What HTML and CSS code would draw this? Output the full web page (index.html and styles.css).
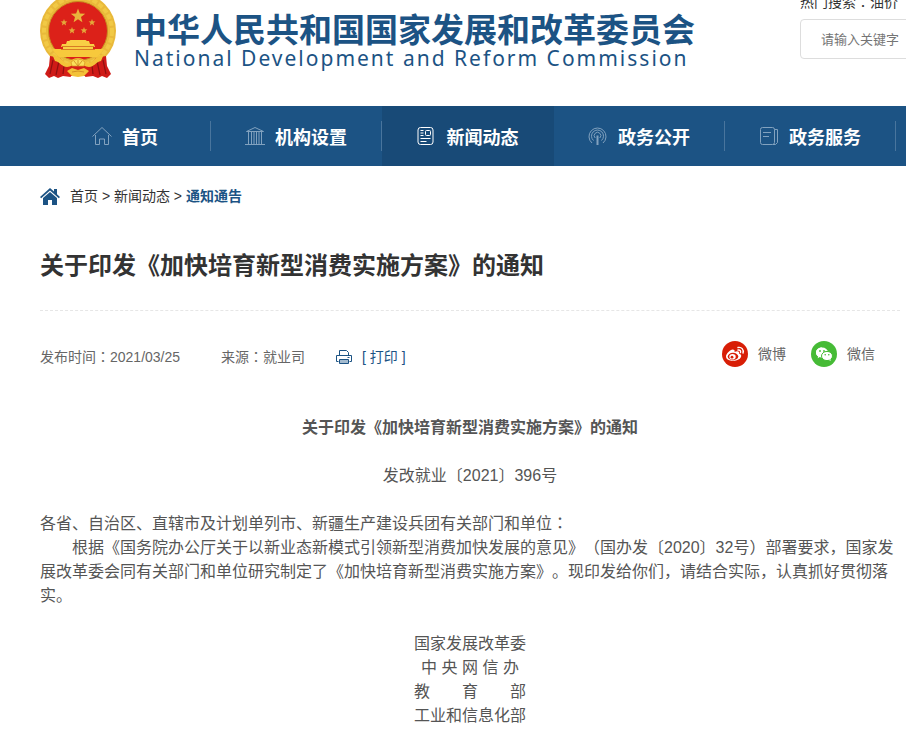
FILE: index.html
```html
<!DOCTYPE html>
<html lang="zh-CN">
<head>
<meta charset="utf-8">
<title>关于印发《加快培育新型消费实施方案》的通知</title>
<link rel="stylesheet" href="styles.css">
</head>
<body>
<header class="header">
  <a class="brand" href="#">
    <svg class="emblem" viewBox="0 0 76 80" aria-hidden="true">
      <circle cx="38" cy="31" r="38" fill="#e9b93a"/>
      <circle cx="38" cy="31" r="34" fill="none" stroke="#f1c945" stroke-width="4" stroke-dasharray="5 2"/>
      <circle cx="38" cy="31" r="29.500" fill="#dc2119" stroke="#c98d20"/>
      <path d="M12 49h52a31 31 0 0 1-7 8H19a31 31 0 0 1-7-8z" fill="#f7c93c"/>
      <path d="M27 41h22l1 3h4l1 3h-2v3H23v-3h-2l1-3h4zM29 41l1.500-1h15l1.500 1v3H29z" fill="#f9cf45"/>
      <path d="M22 46.500h32M21 49.500h34" stroke="#cf661c" stroke-width=".8"/>
      <path d="M38 8.500l1.900 5 5.300.2-4.200 3.400 1.400 5.100L38 19.300l-4.400 2.900 1.400-5.100-4.200-3.400 5.300-.2z" fill="#e9b53c"/>
      <g fill="#e4a83a">
        <path id="star" d="M24 19l.9 2.300 2.500.1-1.900 1.600.6 2.400-2.100-1.300-2.100 1.300.6-2.400-1.900-1.600 2.500-.1z"/>
        <use href="#star" x="28"/><use href="#star" x="8" y="8"/><use href="#star" x="20" y="8"/>
      </g>
      <path d="M10 56l10 2 7 8 4 11-8-1-5 2-4-2-5 2-4-4 4-8z" fill="#cf1a17"/>
      <path d="M66 56l-10 2-7 8-4 11 8-1 5 2 4-2 5 2 4-4-4-8z" fill="#cf1a17"/>
      <path d="M24 65h28v11H24z" fill="#d51f18"/>
      <path d="M13 60l-3 14M19 61l-3 14M24 66l-1 8M63 60l3 14M57 61l3 14M52 66l1 8" stroke="#8f1010" stroke-width="1.200"/>
      <path d="M12 54c8 2 10 7 14 9 4 1 5-5 12-5s8 6 12 5c4-2 6-7 14-9l-3 7c-5 1-7 6-12 6-4 0-6-3-11-3s-7 3-11 3c-5 0-7-5-12-6z" fill="#f3c239"/>
      <path d="M31 62l3-2 4-1 4 1 3 2-1 4H32z" fill="#fae05b" stroke="#d99422" stroke-width=".7"/>
      <path d="M27 71l5-3 6 2 6-2 5 3-5 5-6 1-6-1z" fill="#f3c239"/>
      <path d="M34 61l4 5 4-5M38 60v6M32 72l6-1 6 1" fill="none" stroke="#cc8420" stroke-width=".8"/>
    </svg>
    <span class="names">
      <span class="name-zh">中华人民共和国国家发展和改革委员会</span>
      <span class="name-en" lang="en">National Development and Reform Commission</span>
    </span>
  </a>
  <form class="search">
    <label class="hot" for="q">热门搜索<span class="mid" lang="ja">：</span>油价</label>
    <input class="query" id="q" type="text" placeholder="请输入关键字">
  </form>
</header>

<nav class="nav">
  <ul class="menu">
    <li class="item"><a class="link" href="#">
      <svg class="icon" viewBox="0 0 20 20"><path d="M.5 10.500L10 1.500l9.500 9M3.500 9v9.500h4V13h5v5.500h4V9"/></svg>首页</a></li>
    <li class="item"><a class="link" href="#">
      <svg class="icon" viewBox="0 0 20 20"><path d="M1.500 5.500L10 1.500l8.500 4zM3.500 6v12M6.500 6v12M9 6v12M11.500 6v12M14 6v12M16.500 6v12M0 18.500h20"/></svg>机构设置</a></li>
    <li class="item active"><a class="link" href="#">
      <svg class="icon" viewBox="0 0 20 20"><rect x="1" y="1.500" width="15" height="17" rx="2.500"/><rect x="8.500" y="4.500" width="5" height="5" rx="1"/><path d="M3.500 4.500h3M3.500 7h3M3.500 9.500h3M3.500 12.500h10M3.500 15.500h6"/></svg>新闻动态</a></li>
    <li class="item"><a class="link" href="#">
      <svg class="icon" viewBox="0 0 20 20"><path d="M4 17a8.500 8.500 0 1 1 11 0M5.500 14.500a6 6 0 1 1 8 0M7.200 12a3.300 3.300 0 1 1 4.600 0"/><path d="M9.500 9.500V19" stroke-width="2"/></svg>政务公开</a></li>
    <li class="item"><a class="link" href="#">
      <svg class="icon" viewBox="0 0 20 20"><rect x="1.500" y="1.500" width="14" height="17" rx="2"/><path d="M15.500 3.500h3v13l-2 2H14M4 6.500h8M4 10.500h6"/></svg>政务服务</a></li>
  </ul>
</nav>

<main class="page">
  <div class="crumbs">
    <svg class="home" viewBox="0 0 20 17" aria-hidden="true"><path d="M10 0l4 3.500V1h3v5.200l3 2.800-1.200 1.200L10 2.500l-8.800 7.700L0 9z"/><path d="M10 4l7 6v7h-5v-5H8v5H3v-7z"/></svg>
    <span><a href="#">首页</a> &gt; <a href="#">新闻动态</a> &gt; <a class="current" href="#">通知通告</a></span>
  </div>
  <h1 class="title">关于印发《加快培育新型消费实施方案》的通知</h1>
  <div class="meta">
    <span>发布时间<span class="mid" lang="ja">：</span>2021/03/25</span>
    <span class="source">来源<span class="mid" lang="ja">：</span>就业司</span>
    <button class="print" type="button">
      <svg class="printer" viewBox="0 0 16 16" aria-hidden="true"><path d="M3.500 6.500v-5h7l2 2v3M2.500 12.500h-2v-6h15v6h-2M11.500 8.500h2"/><path class="tray" d="M3.500 10.500h9v4h-9z"/></svg>[ 打印 ]</button>
    <div class="share">
      <a class="channel" href="#">
        <svg class="badge" viewBox="0 0 26 26"><circle cx="13" cy="13" r="13" fill="#d81e06"/><path d="M10.500 8.500c2 0 2.500 1 2 2.500 3-1.300 5-.7 4.500 1.500 3 1 2.700 3.500.8 5.300C14 21 4 20.500 4 15.500c0-3 4.500-7 6.500-7z" fill="#fff"/><ellipse cx="11" cy="15.500" rx="5.300" ry="3.700" fill="#d81e06"/><ellipse cx="10.500" cy="15.700" rx="3.200" ry="2.800" fill="#fff"/><circle cx="10" cy="16.200" r="1.400" fill="#d81e06"/><path d="M16 6.500c3.500-.8 6 2 5 5.500M16 9c2-.4 3 1 2.500 2.500" fill="none" stroke="#fff" stroke-width="1.400" stroke-linecap="round"/></svg>微博</a>
      <a class="channel" href="#">
        <svg class="badge" viewBox="0 0 26 26"><circle cx="13" cy="13" r="13" fill="#46bb36"/><path d="M11 6.500c-3.500 0-6 2.200-6 5 0 1.600.8 3 2.200 3.900l-.6 1.900 2.200-1.200 2.200.3z" fill="#fff"/><ellipse cx="11" cy="11.500" rx="6" ry="5" fill="#fff"/><ellipse cx="16" cy="15" rx="5.500" ry="4.600" fill="#fff" stroke="#46bb36"/><path d="M18 19l1.700 1-.4-2z" fill="#fff"/><g fill="#46bb36"><circle cx="9" cy="10" r=".9"/><circle cx="13" cy="10" r=".9"/><circle cx="14.200" cy="13.700" r=".8"/><circle cx="17.800" cy="13.700" r=".8"/></g></svg>微信</a>
    </div>
  </div>

  <article class="article">
    <p class="center"><strong>关于印发《加快培育新型消费实施方案》的通知</strong></p>
    <p class="center">发改就业〔2021〕396号</p>
    <div class="block">
      <p>各省、自治区、直辖市及计划单列市、新疆生产建设兵团有关部门和单位<span class="mid" lang="ja">：</span></p>
      <p class="indent">根据《国务院办公厅关于以新业态新模式引领新型消费加快发展的意见》（国办发〔2020〕32号）部署要求，国家发展改革委会同有关部门和单位研究制定了《加快培育新型消费实施方案》。现印发给你们，请结合实际，认真抓好贯彻落实。</p>
    </div>
    <div class="center">
      <p>国家发展改革委</p>
      <p>中 央 网 信 办</p>
      <p>教　　育　　部</p>
      <p>工业和信息化部</p>
    </div>
  </article>
</main>
</body>
</html>
```

FILE: styles.css
```css
* { box-sizing: border-box; }

body {
  margin: 0;
  background: #fff;
  color: #333;
  font: 14px/24px "Liberation Sans", "Noto Sans CJK SC", sans-serif;
  text-spacing-trim: space-all;
}

a { color: inherit; text-decoration: none; }
p, h1, ul { margin: 0; padding: 0; }
.mid { font-family: "Noto Sans CJK JP", sans-serif; line-height: 1; }

.header {
  display: flex;
  justify-content: space-between;
  height: 106px;
  padding-left: 40px;
  overflow: hidden;
}
.brand { display: flex; flex: none; gap: 18px; color: #1c5384; }
.emblem { width: 76px; height: 80px; }
.names { display: flex; flex-direction: column; padding-top: 14px; white-space: nowrap; }
.name-zh { font-size: 33px; font-weight: 700; line-height: 34px; }
.name-en { font-family: "Noto Sans", sans-serif; font-size: 21px; line-height: 20px; letter-spacing: 2px; }

.search { flex: none; width: 106px; margin-top: -10px; white-space: nowrap; }
.hot { display: block; margin-bottom: 5px; }
.query {
  width: 240px;
  height: 40px;
  padding: 0 20px;
  border: 1px solid #ddd;
  border-radius: 4px;
  font: 13px "Liberation Sans", "Noto Sans CJK SC", sans-serif;
}
.query::placeholder { color: #757575; }

.nav { padding-left: 40px; background: #1c5384; }
.menu { display: flex; list-style: none; }
.item { display: flex; align-items: center; flex: 0 0 171px; height: 60px; }
.item.active { flex-basis: 172px; background: #184a77; }
.link {
  display: flex;
  flex: 1;
  align-items: center;
  justify-content: center;
  gap: 10px;
  height: 30px;
  padding-top: 3px;
  border-right: 1px solid #49759d;
  color: #fff;
  font-size: 18px;
  font-weight: 700;
}
.active .link { border-color: transparent; }
.icon { width: 20px; height: 20px; margin-bottom: 3px; fill: none; stroke: #82a2bf; }
.active .icon { stroke: #fff; }

.page { max-width: 1200px; padding: 0 6px 0 40px; }
.crumbs { display: flex; align-items: center; gap: 10px; padding-top: 18px; }
.home { width: 20px; height: 17px; fill: #1c5384; }
.current { color: #1c5384; font-weight: 700; }
.title {
  padding: 40px 0 26px;
  border-bottom: 1px dashed #e6e6e6;
  font-size: 24px;
  line-height: 36px;
}

.meta { display: flex; align-items: center; padding: 27px 25px 0 0; height: 64px; color: #666; }
.source { margin: 0 31px 0 41px; }
.print {
  display: flex;
  align-items: center;
  gap: 10px;
  padding: 0;
  border: 0;
  background: none;
  color: #1c5384;
  font: inherit;
}
.printer { width: 16px; height: 16px; fill: none; stroke: #1c5384; }
.tray { fill: #a4bbcf; }
.share { display: flex; gap: 25px; margin: 0 0 6px auto; }
.channel { display: flex; align-items: center; gap: 10px; }
.badge { width: 26px; height: 26px; }

.article { padding-top: 41px; color: #555; font-size: 16px; }
.center, .block { margin-bottom: 24px; }
.center { text-align: center; }
.indent { text-indent: 2em; }
```
